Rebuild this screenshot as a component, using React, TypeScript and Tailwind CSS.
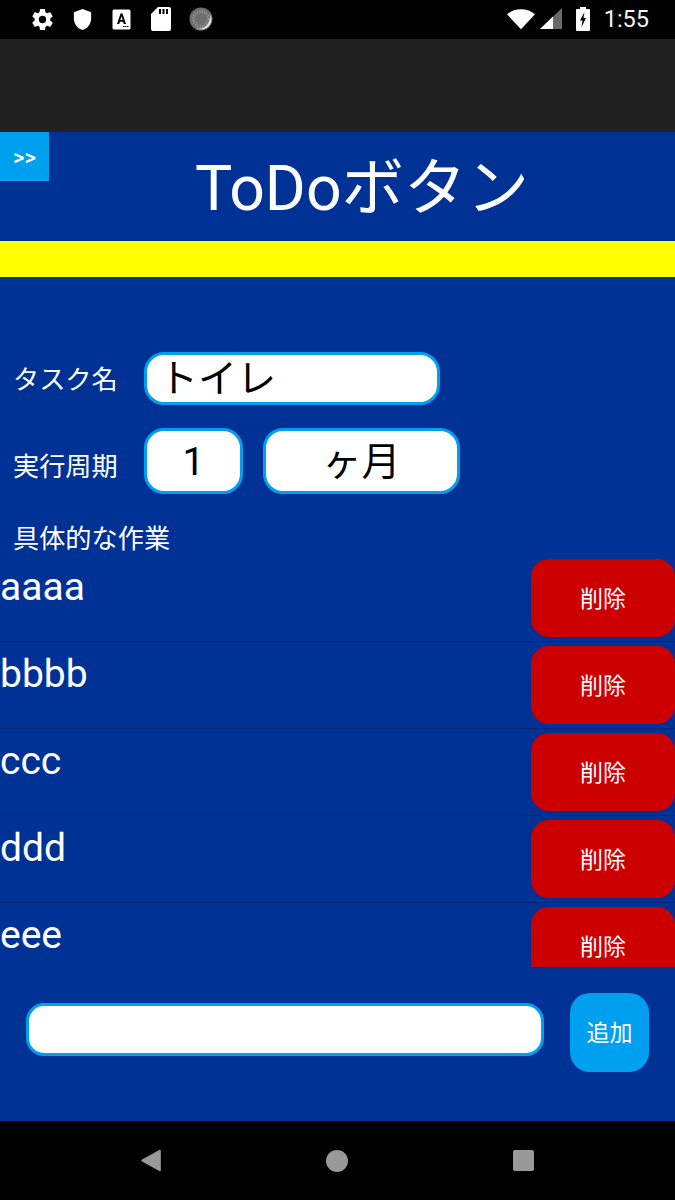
const jp = "font-['Roboto','Noto_Sans_CJK_JP',sans-serif]";

const tasks = ["aaaa", "bbbb", "ccc", "ddd", "eee"];

function StatusBar() {
  return (
    <div className="flex h-[39px] items-center justify-between bg-black pl-[30px] pr-[26px] text-white">
      <div className="flex items-center gap-[16px]">
        <svg width="25" height="25" viewBox="0 0 24 24" fill="#fff">
          <path d="M19.4 13c.04-.32.1-.66.1-1s-.06-.68-.1-1l2.1-1.65c.2-.15.25-.42.12-.64l-2-3.46c-.12-.22-.39-.3-.61-.22l-2.49 1c-.52-.4-1.08-.73-1.69-.98l-.38-2.65A.49.49 0 0 0 14 2h-4c-.25 0-.46.18-.49.42l-.38 2.65c-.61.25-1.17.59-1.69.98l-2.49-1a.5.5 0 0 0-.61.22l-2 3.46c-.13.22-.07.49.12.64L4.57 11c-.04.32-.07.66-.07 1s.03.68.07 1l-2.11 1.65c-.19.15-.25.42-.12.64l2 3.46c.12.22.39.3.61.22l2.49-1c.52.4 1.08.73 1.69.98l.38 2.65c.03.24.24.42.49.42h4c.25 0 .46-.18.49-.42l.38-2.65c.61-.25 1.17-.59 1.69-.98l2.49 1c.22.08.49 0 .61-.22l2-3.46c.12-.22.07-.49-.12-.64L19.4 13zM12 15.5a3.5 3.5 0 1 1 0-7 3.5 3.5 0 0 1 0 7z" />
        </svg>
        <svg width="23" height="25" viewBox="0 0 24 24" fill="#fff">
          <path d="M12 1 3 4.500v6.500c0 5.500 3.800 10.700 9 12 5.200-1.300 9-6.500 9-12V4.500L12 1z" />
        </svg>
        <svg width="19" height="21" viewBox="0 0 19 21" className="ml-[2px]">
          <rect x="0.500" y="0.500" width="18" height="20" rx="1.500" fill="#fff" />
          <path d="M5 15 8.500 4.500h2L14 15h-2.200l-.7-2.200H7.900L7.200 15H5zm3.400-4h2.200L9.500 7.300 8.400 11z" fill="#000" />
          <path d="M11 17h1.500v1H11zm2 0h1.500v1H13zm2 0h1.500v1H15z" fill="#000" />
        </svg>
        <svg width="20" height="24" viewBox="0 0 20 24" className="ml-[4px]">
          <path d="M7 0h11a2 2 0 0 1 2 2v20a2 2 0 0 1-2 2H2a2 2 0 0 1-2-2V7z" fill="#fff" />
          <path d="M8 2h2v5H8zm3.500 0h2v5h-2zM15 2h2v5h-2z" fill="#000" />
        </svg>
        <svg width="24" height="24" viewBox="0 0 24 24" className="ml-[2px]">
          <circle cx="12" cy="12" r="11.500" fill="#6e6e6e" />
          <circle cx="12" cy="12" r="7.500" fill="none" stroke="#9a9a9a" strokeWidth="3" strokeDasharray="1 1.400" />
          <path d="M22.500 12A10.500 10.500 0 0 1 7 21.300 11 11 0 0 0 20.500 13.500 9 9 0 0 0 21 7a10.500 10.500 0 0 1 1.500 5z" fill="#e8e8e8" />
        </svg>
      </div>
      <div className="flex items-center">
        <svg width="28" height="21" viewBox="0 0 30 22" fill="#fff">
          <path d="M15 21.500 0 5.500C4 2 9 0 15 0s11 2 15 5.500L15 21.500z" />
        </svg>
        <svg width="22" height="22" viewBox="0 0 22 22" className="ml-[5px]">
          <path d="M0 21 22 0v21H0z" fill="#6a6a6a" />
          <path d="M0 21 13 8.500V21H0z" fill="#fff" />
        </svg>
        <svg width="14" height="24" viewBox="0 0 14 24" className="ml-[14px]">
          <path d="M4 0h6v2h3a1 1 0 0 1 1 1v20a1 1 0 0 1-1 1H1a1 1 0 0 1-1-1V3a1 1 0 0 1 1-1h3V0z" fill="#fff" />
          <path d="M8.500 5 4 13.500h2.500L5.500 20 10 11H7.500l1-6z" fill="#000" />
        </svg>
        <span className={`ml-[14px] text-[23.500px] leading-none text-[#f2f2f2] ${jp}`}>1:55</span>
      </div>
    </div>
  );
}

function NavBar() {
  return (
    <div className="flex h-[79px] items-center bg-black">
      <div className="ml-[141px] flex w-[393px] items-center justify-between">
        <svg width="21" height="23" viewBox="0 0 22 23" fill="#999">
          <path d="M20 1v21L1 11.500 20 1z" stroke="#999" strokeWidth="1.500" strokeLinejoin="round" />
        </svg>
        <span className="-ml-[2px] h-[22px] w-[22px] rounded-full bg-[#999]" />
        <span className="h-[21px] w-[21px] rounded-[2px] bg-[#999]" />
      </div>
    </div>
  );
}

function TaskRow({ name }: { name: string }) {
  return (
    <div className="flex h-[87px] shrink-0 justify-between border-b border-[#00257f] pt-[4px]">
      <span className="pt-[4px] text-[39px] leading-[48px] text-white">{name}</span>
      <button className="h-[78px] w-[144px] rounded-[18px] bg-[#cc0000] pt-[5px] text-[23px] text-white">削除</button>
    </div>
  );
}

export default function App() {
  return (
    <div className={`flex h-[1200px] w-[675px] flex-col overflow-hidden bg-[#003296] ${jp}`}>
      <StatusBar />
      <div className="h-[93px] bg-[#212121]" />

      <div className="relative flex h-[109px] items-center justify-center pl-[49px] pt-[6px]">
        <button className="absolute left-0 top-0 h-[49px] w-[49px] bg-[#00a0f0] pt-[2px] text-[22px] font-medium text-white">
          &gt;&gt;
        </button>
        <h1 className="text-[62.500px] leading-none text-white">ToDoボタン</h1>
      </div>
      <div className="h-[36px] bg-[#ffff00]" />

      <div className="mt-[75px] flex items-center">
        <span className="ml-[13px] w-[131px] pt-[4px] text-[26.200px] leading-[34px] text-white">タスク名</span>
        <div className="flex h-[53px] w-[296px] items-center rounded-[20px] border-[3px] border-[#00a0f0] bg-white pl-[12px] pt-[3px] text-[39px] text-black">
          トイレ
        </div>
      </div>
      <div className="mt-[23px] flex items-center">
        <span className="ml-[13px] w-[131px] pt-[13px] text-[26.200px] leading-[34px] text-white">実行周期</span>
        <div className="flex h-[66px] w-[99px] items-center justify-center rounded-[20px] border-[3px] border-[#00a0f0] bg-white pt-[3px] text-[39px] text-black">
          1
        </div>
        <div className="ml-[20px] flex h-[66px] w-[197px] items-center justify-center rounded-[20px] border-[3px] border-[#00a0f0] bg-white pt-[3px] text-[39px] text-black">
          ヶ月
        </div>
      </div>
      <p className="ml-[13px] mt-[29px] text-[26.200px] leading-[32px] text-white">具体的な作業</p>

      <div className="h-[413px] overflow-hidden">
        {tasks.map((t) => (
          <TaskRow key={t} name={t} />
        ))}
      </div>

      <div className="flex h-[154px] items-start pl-[26px]">
        <div className="mt-[36px] h-[53px] w-[518px] rounded-[18px] border-[3px] border-[#00a0f0] bg-white" />
        <button className="ml-[26px] mt-[26px] h-[79px] w-[79px] rounded-[20px] bg-[#00a0f0] pt-[2px] text-[23px] text-white">追加</button>
      </div>

      <NavBar />
    </div>
  );
}
